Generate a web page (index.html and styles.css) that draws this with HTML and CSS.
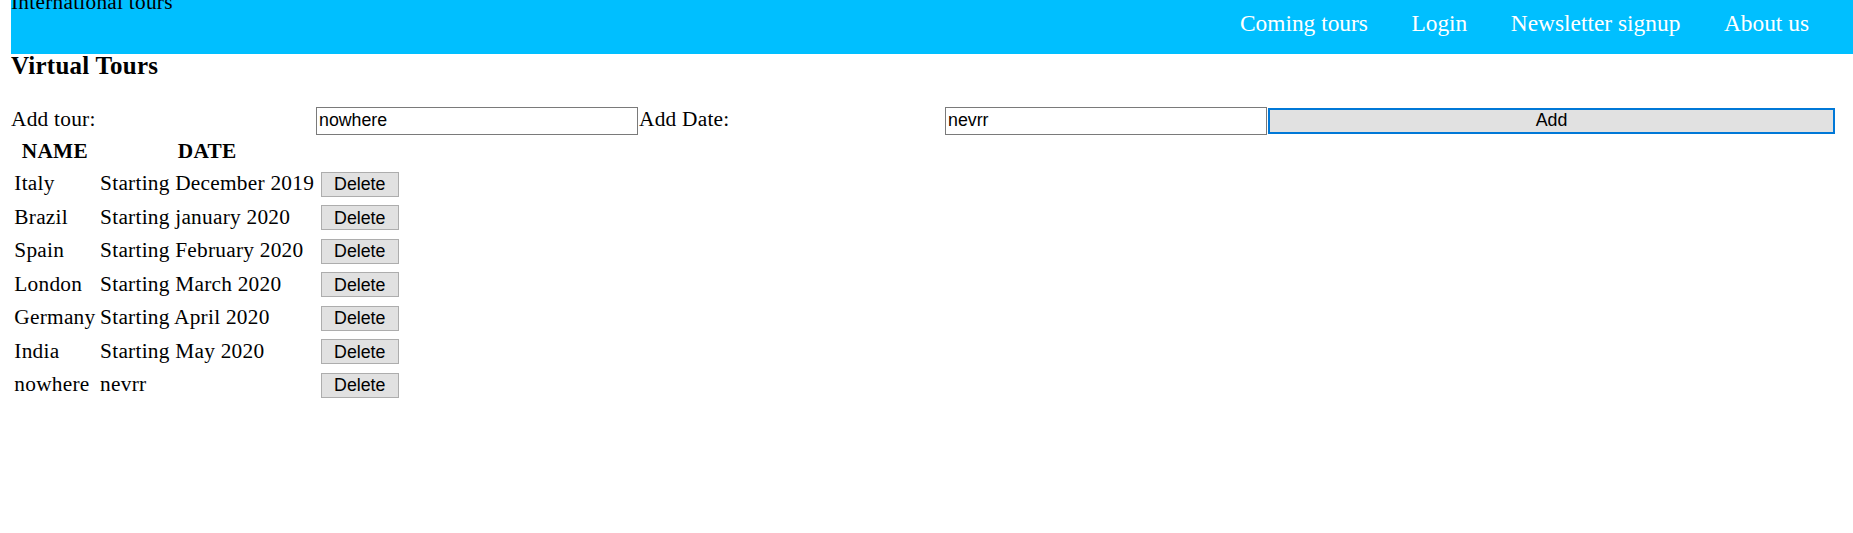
FILE: index.html
```html
<!DOCTYPE html>
<html lang="en">
<head>
<meta charset="utf-8">
<title>International tours</title>
<link rel="stylesheet" href="styles.css">
</head>
<body>
<header class="topbar">
  <div class="brand">International tours</div>
  <nav class="menu">
    <a class="menu-link" href="#">Coming tours</a>
    <a class="menu-link" href="#">Login</a>
    <a class="menu-link" href="#">Newsletter signup</a>
    <a class="menu-link" href="#">About us</a>
  </nav>
</header>
<main class="content">
  <h3 class="page-title">Virtual Tours</h3>
  <form class="add-form">
    <label class="field-label" for="tour">Add tour:</label>
    <input class="field-input" id="tour" type="text" value="nowhere">
    <label class="field-label" for="date">Add Date:</label>
    <input class="field-input" id="date" type="text" value="nevrr">
    <button class="add-btn" type="button">Add</button>
  </form>
  <table class="tours">
    <thead>
      <tr><th class="head">NAME</th><th class="head">DATE</th><th class="head"></th></tr>
    </thead>
    <tbody>
      <tr><td class="cell">Italy</td><td class="cell">Starting December 2019</td><td class="cell"><button class="del-btn" type="button">Delete</button></td></tr>
      <tr><td class="cell">Brazil</td><td class="cell">Starting january 2020</td><td class="cell"><button class="del-btn" type="button">Delete</button></td></tr>
      <tr><td class="cell">Spain</td><td class="cell">Starting February 2020</td><td class="cell"><button class="del-btn" type="button">Delete</button></td></tr>
      <tr><td class="cell">London</td><td class="cell">Starting March 2020</td><td class="cell"><button class="del-btn" type="button">Delete</button></td></tr>
      <tr><td class="cell">Germany</td><td class="cell">Starting April 2020</td><td class="cell"><button class="del-btn" type="button">Delete</button></td></tr>
      <tr><td class="cell">India</td><td class="cell">Starting May 2020</td><td class="cell"><button class="del-btn" type="button">Delete</button></td></tr>
      <tr><td class="cell">nowhere</td><td class="cell">nevrr</td><td class="cell"><button class="del-btn" type="button">Delete</button></td></tr>
    </tbody>
  </table>
</main>
</body>
</html>
```

FILE: styles.css
```css
html {
  background: #fff;
}

body {
  margin: 0 0 0 11px;
  font-family: "Liberation Serif", "Times New Roman", serif;
  font-size: 21.33px;
  letter-spacing: 0.25px;
  color: #000;
  overflow: hidden;
}

.topbar {
  display: flex;
  justify-content: space-between;
  align-items: flex-start;
  height: 54px;
  background: #00bfff;
}

.brand {
  margin-top: -10.5px;
  line-height: 24.5px;
  font-size: 21.33px;
}

.menu {
  display: flex;
  gap: 43.5px;
  padding: 9.6px 44px 0 0;
}

.menu-link {
  font-size: 23.4px;
  line-height: 27px;
  letter-spacing: 0;
  color: #fff;
  text-decoration: none;
}

.page-title {
  margin: -2px 0 0;
  font-size: 24.96px;
  line-height: 28.7px;
  font-weight: bold;
}

.add-form {
  display: grid;
  grid-template-columns: 305px 323px 306px 323px 567px;
  align-items: start;
  margin: 26px 0 0;
  height: 28px;
}

.field-label {
  line-height: 24.5px;
  margin-top: 0.5px;
}

.field-input {
  box-sizing: border-box;
  width: 322px;
  height: 28px;
  margin: 0;
  padding: 0 2px;
  border: 1px solid #7a7a7a;
  background: #fff;
  font-family: "Liberation Sans", Arial, sans-serif;
  font-size: 17.78px;
  letter-spacing: 0;
  color: #000;
  outline: none;
}

.add-btn {
  box-sizing: border-box;
  width: 567px;
  height: 26px;
  margin: 1px 0 0;
  padding: 0;
  border: 2px solid #0078d7;
  background: #e1e1e1;
  font-family: "Liberation Sans", Arial, sans-serif;
  font-size: 17.78px;
  letter-spacing: 0;
  color: #000;
}

.tours {
  border-collapse: separate;
  border-spacing: 2.67px;
}

.head {
  padding: 2.3px 1.33px 1.33px;
  font-weight: bold;
  text-align: center;
  line-height: 24.5px;
}

.cell {
  height: 31.5px;
  box-sizing: border-box;
  padding: 4.5px 1.33px 1.5px;
  vertical-align: top;
  line-height: 24.5px;
  text-align: left;
  white-space: nowrap;
}

.del-btn {
  box-sizing: border-box;
  width: 78px;
  height: 25px;
  margin: 0 0 0 2px;
  padding: 0;
  border: 1px solid #adadad;
  background: #e1e1e1;
  font-family: "Liberation Sans", Arial, sans-serif;
  font-size: 17.78px;
  letter-spacing: 0;
  line-height: 20px;
  color: #000;
  vertical-align: baseline;
}
```
